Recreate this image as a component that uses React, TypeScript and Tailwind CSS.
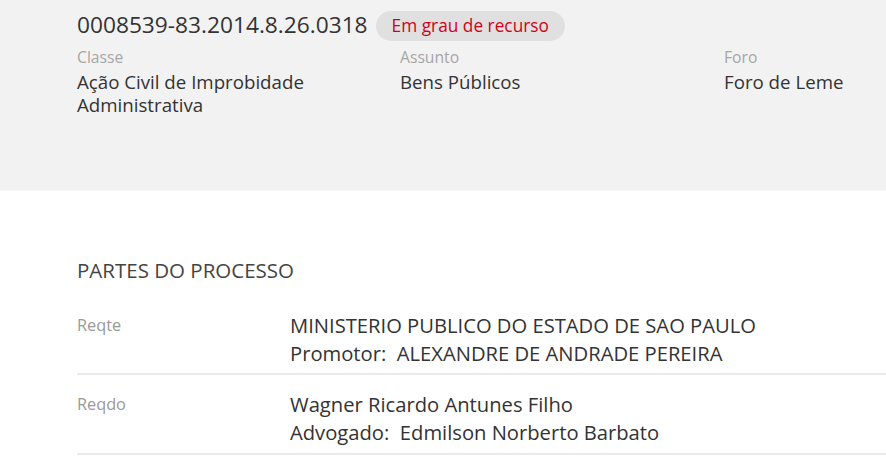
export default function App() {
  const font = { fontFamily: '"Open Sans", "Noto Sans", sans-serif' };
  return (
    <div className="w-[886px] h-[462px] overflow-hidden bg-white text-[#333]" style={font}>
      {/* Cabeçalho */}
      <div className="h-[191px] bg-[#f2f2f2] border-b border-[#f7f7f7] pl-[77px]">
        <div className="flex items-center gap-[8px] pt-[11px]">
          <span className="text-[22.7px] leading-[30px] text-[#333] -mt-[3px]">0008539-83.2014.8.26.0318</span>
          <span className="h-[30px] px-[16px] rounded-full bg-[#e0e0e0] text-[17.3px] leading-[30px] text-[#d0021b]">
            Em grau de recurso
          </span>
        </div>
        <div className="grid grid-cols-[323px_324px_1fr] mt-[4px]">
          <div>
            <div className="text-[15.7px] leading-[24px] text-[#a6a6a6]">Classe</div>
            <div className="mt-[1px] text-[18.7px] leading-[24px] text-[#333]">
              <div>Ação Civil de Improbidade</div>
              <div className="-mt-[1px]">Administrativa</div>
            </div>
          </div>
          <div>
            <div className="text-[15.7px] leading-[24px] text-[#a6a6a6]">Assunto</div>
            <div className="mt-[1px] text-[18.7px] leading-[24px] text-[#333]">Bens Públicos</div>
          </div>
          <div>
            <div className="text-[15.7px] leading-[24px] text-[#a6a6a6]">Foro</div>
            <div className="mt-[1px] text-[18.7px] leading-[24px] text-[#333]">Foro de Leme</div>
          </div>
        </div>
      </div>

      {/* Partes */}
      <div className="pl-[77px] pt-[65px]">
        <div className="text-[20.5px] leading-[28px] text-[#444]">PARTES DO PROCESSO</div>
        <div className="mt-[27px]">
          <div className="flex border-b-2 border-[#ebebeb] pb-[6px]">
            <div className="w-[213px] text-[16.3px] leading-[28px] text-[#999]">Reqte</div>
            <div className="text-[20.2px] leading-[28px] text-[#333]">
              <div>MINISTERIO PUBLICO DO ESTADO DE SAO PAULO</div>
              <div>Promotor:&nbsp; ALEXANDRE DE ANDRADE PEREIRA</div>
            </div>
          </div>
          <div className="flex border-b-2 border-[#ebebeb] pt-[15px] pb-[7px]">
            <div className="w-[213px] text-[16.3px] leading-[28px] text-[#999]">Reqdo</div>
            <div className="text-[20.2px] leading-[28px] text-[#333]">
              <div>Wagner Ricardo Antunes Filho</div>
              <div>Advogado:&nbsp; Edmilson Norberto Barbato</div>
            </div>
          </div>
        </div>
      </div>
    </div>
  );
}
